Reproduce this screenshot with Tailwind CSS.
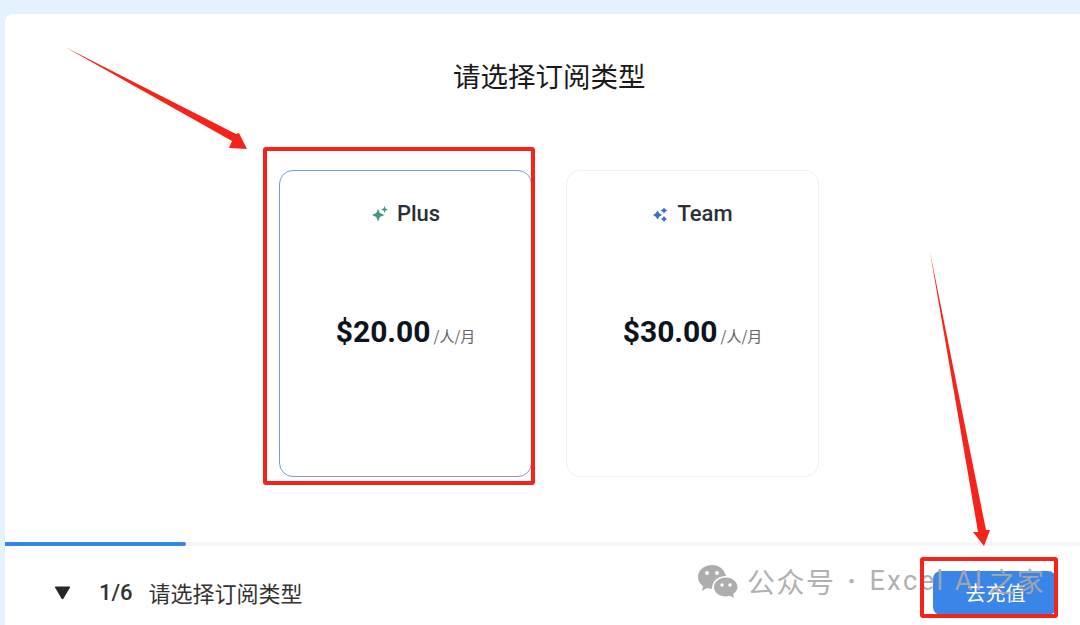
<!DOCTYPE html>
<html lang="zh">
<head>
<meta charset="utf-8">
<script src="https://cdn.jsdelivr.net/npm/@tailwindcss/browser@4"></script>
</head>
<body class="m-0">
<div class="relative w-[1080px] h-[625px] overflow-hidden bg-[#e3f2fd] pt-[14px] pl-[5px] font-['Roboto','Noto_Sans_CJK_SC',sans-serif]">
  <main class="flex flex-col h-[611px] bg-white rounded-tl-lg">
    <h1 class="h-[156px] pt-[42px] pl-[448px] text-[27.500px] leading-[38px] font-normal text-[#1a1a1a] font-['Noto_Sans_CJK_SC',sans-serif]">请选择订阅类型</h1>
    <section class="flex gap-[34px] pl-[274px] h-[372px]">
      <div class="w-[253px] h-[307px] rounded-[14px] border border-[#6d9fd8] bg-white flex flex-col items-center">
        <div class="flex items-center gap-[9px] mt-[30px] h-[26px] pl-[1px]">
          <svg class="w-[16px] h-[16px]" viewBox="0 0 16 16" fill="#3f9a7c"><path d="M6 3 L7.800 7 L12.500 9 L7.800 11 L6 15.500 L4.200 11 L0 9 L4.200 7 Z"/><path d="M12.500 0 L13.500 2.500 L16 3.500 L13.500 4.500 L12.500 7 L11.500 4.500 L9 3.500 L11.500 2.500 Z"/></svg>
          <span class="text-[22px] leading-[26px] font-medium text-[#2b2f36]">Plus</span>
        </div>
        <div class="flex items-baseline gap-[3px] mt-[85px]">
          <span class="text-[30px] leading-[40px] font-bold text-[#0d1420]">$20.00</span>
          <span class="text-[15px] text-[#666] font-['Noto_Sans_CJK_SC',sans-serif]">/人/月</span>
        </div>
      </div>
      <div class="w-[253px] h-[307px] rounded-[14px] border border-[#f0f0f0] bg-white flex flex-col items-center">
        <div class="flex items-center gap-[9px] mt-[30px] h-[26px] pl-[1px]">
          <svg class="w-[15px] h-[15px]" viewBox="0 0 15 15" fill="#3b6fc4"><path d="M4.500 3.500 L6.200 6.300 L9 8 L6.200 9.700 L4.500 12.500 L2.800 9.700 L0 8 L2.800 6.300 Z"/><path d="M11 0.500 L12.200 2.300 L14.500 3.500 L12.200 4.700 L11 6.500 L9.800 4.700 L7.500 3.500 L9.800 2.300 Z"/><path d="M11 9 L12.200 10.800 L14 12 L12.200 13.200 L11 15 L9.800 13.200 L8 12 L9.800 10.800 Z"/></svg>
          <span class="text-[22px] leading-[26px] font-medium text-[#2b2f36]">Team</span>
        </div>
        <div class="flex items-baseline gap-[3px] mt-[85px]">
          <span class="text-[30px] leading-[40px] font-bold text-[#0d1420]">$30.00</span>
          <span class="text-[15px] text-[#666] font-['Noto_Sans_CJK_SC',sans-serif]">/人/月</span>
        </div>
      </div>
    </section>
    <div class="h-[4px] bg-[#f5f5f5]">
      <div class="w-[181px] h-full bg-[#3586e0] rounded-r-full"></div>
    </div>
    <footer class="flex items-center h-[79px] pl-[49px] pr-[24px] pt-[13px]">
      <svg class="w-[17px] h-[14px] translate-y-[1px]" viewBox="0 0 17 14" fill="#262626"><path d="M1 1.500 Q0.500 0.500 2 0.500 H15 Q16.500 0.500 16 1.500 L9.500 12.500 Q8.500 14 7.500 12.500 Z"/></svg>
      <span class="ml-[28px] text-[22px] font-medium text-[#333]">1/6</span>
      <span class="ml-[16px] text-[22px] text-[#333] font-['Noto_Sans_CJK_SC',sans-serif]">请选择订阅类型</span>
      <button class="ml-auto w-[123px] h-[44px] translate-y-[1px] rounded-lg bg-[#3a86e8] pl-[2px] text-[20px] text-white font-['Noto_Sans_CJK_SC',sans-serif]">去充值</button>
    </footer>
  </main>

  <!-- WeChat watermark over the footer -->
  <div class="absolute left-[697px] top-[564px] flex items-center text-[#a9a9a9] whitespace-nowrap font-['Noto_Sans_CJK_SC',sans-serif]">
    <svg class="w-[41px] h-[34px]" viewBox="0 0 41 34" fill="#adadad">
      <path d="M15 1 C7 1 1 6 1 13 C1 17 3 20 6 22 L5 27 L10 24 C11.500 24.500 13 24.700 15 24.700 C15 17 21 12 29 12 C27.500 5.500 22 1 15 1 Z"/>
      <path d="M29 13.500 C22 13.500 17 18 17 23 C17 28.500 22 32.500 29 32.500 C30.500 32.500 31.500 32.300 33 31.800 L37 34 L36 30 C38.500 28.500 40.500 26 40.500 23 C40.500 18 35.500 13.500 29 13.500 Z"/>
      <circle cx="10" cy="9" r="2" fill="#fff"/><circle cx="20" cy="9" r="2" fill="#fff"/>
      <circle cx="25" cy="21" r="1.700" fill="#fff"/><circle cx="33" cy="21" r="1.700" fill="#fff"/>
    </svg>
    <span class="ml-[9px] text-[28px] leading-[34px] tracking-[1.500px] opacity-90">公众号</span>
    <span class="ml-[6px] text-[20px] leading-[34px] opacity-90">·</span>
    <span class="ml-[8px] text-[27px] leading-[34px] tracking-[2.500px] opacity-90 font-['Roboto']">Excel AI</span>
    <span class="ml-[4px] text-[27px] leading-[34px] tracking-[1px] opacity-90">之家</span>
  </div>

  <!-- Red annotations -->
  <div class="absolute left-[263px] top-[147px] w-[272px] h-[338px] border-4 border-[#f5231a] rounded-[3px]"></div>
  <div class="absolute left-[920px] top-[557px] w-[138px] h-[61px] border-4 border-[#f5231a] rounded-[3px]"></div>
  <svg class="absolute left-0 top-0 w-[1080px] h-[625px] pointer-events-none" viewBox="0 0 1080 625" fill="#f5231a">
    <path d="M65 47 L236 134 L239 133 L247 149 L229 148 L232 141 Z"/>
    <path d="M930 252 L986 530 L990 530 L984 546 L973 532 L978 532 Z"/>
  </svg>
</div>
</body>
</html>
